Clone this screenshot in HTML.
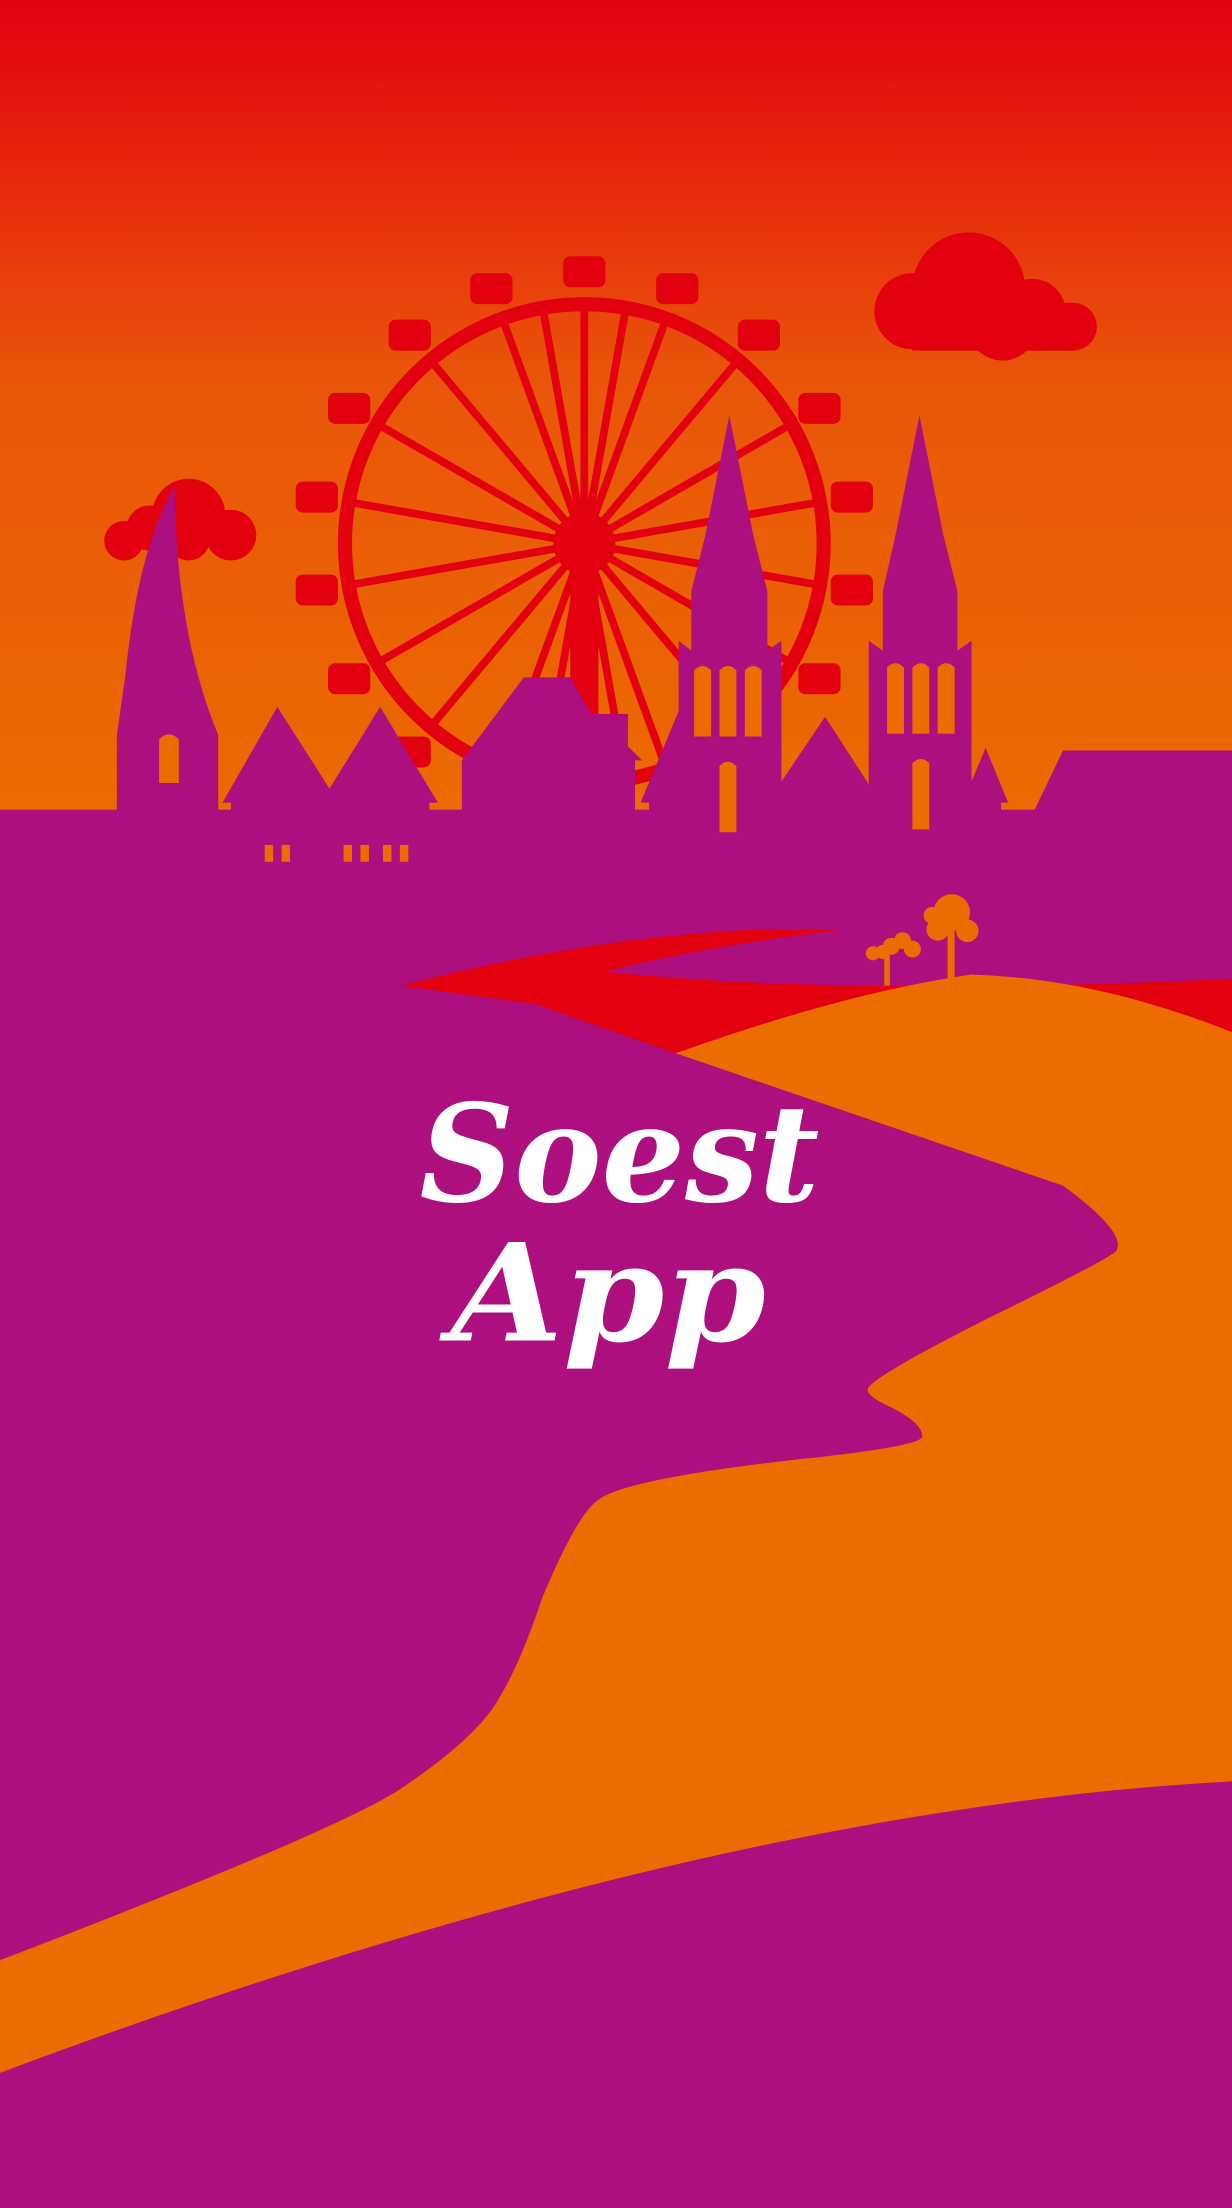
<!DOCTYPE html>
<html><head><meta charset="utf-8"><style>
html,body{margin:0;padding:0;width:1232px;height:2208px;overflow:hidden}
svg{display:block}
</style></head><body>
<svg width="1232" height="2208" viewBox="0 0 875 1568" preserveAspectRatio="none" xmlns="http://www.w3.org/2000/svg">
<defs>
<linearGradient id="sky" x1="0" y1="0" x2="0" y2="1">
<stop offset="0" stop-color="#e3000f"/>
<stop offset="0.45" stop-color="#e9560a"/>
<stop offset="1" stop-color="#ec6c00"/>
</linearGradient>
<rect id="g" x="-15" y="-11" width="30" height="22" rx="5"/>
<line id="s" x1="0" y1="0" x2="0" y2="-166" stroke="#e3000f" stroke-width="5.5"/>
</defs>
<rect width="875" height="1568" fill="#ec6c00"/>
<rect width="875" height="600" fill="url(#sky)"/>

<!-- clouds -->
<g fill="#e3000f">
<circle cx="648" cy="221" r="27"/><circle cx="688" cy="205" r="40"/><circle cx="733" cy="222" r="24"/><circle cx="712" cy="231" r="25"/><circle cx="762" cy="232" r="17"/>
<rect x="648" y="215" width="114" height="34"/>
<circle cx="88" cy="384" r="14"/><circle cx="106" cy="375" r="16"/><circle cx="134" cy="366" r="26"/><circle cx="164" cy="380" r="18"/><circle cx="134" cy="383" r="15"/>
</g>

<!-- ferris wheel -->
<g transform="translate(415,386)" fill="#e3000f">
<circle r="170" fill="none" stroke="#e3000f" stroke-width="10"/>
<use href="#s" transform="rotate(0)"/><use href="#s" transform="rotate(20)"/><use href="#s" transform="rotate(40)"/><use href="#s" transform="rotate(60)"/><use href="#s" transform="rotate(80)"/><use href="#s" transform="rotate(100)"/><use href="#s" transform="rotate(120)"/><use href="#s" transform="rotate(140)"/><use href="#s" transform="rotate(160)"/><use href="#s" transform="rotate(180)"/><use href="#s" transform="rotate(200)"/><use href="#s" transform="rotate(220)"/><use href="#s" transform="rotate(240)"/><use href="#s" transform="rotate(260)"/><use href="#s" transform="rotate(280)"/><use href="#s" transform="rotate(300)"/><use href="#s" transform="rotate(320)"/><use href="#s" transform="rotate(340)"/>
<use href="#s" transform="rotate(10)"/><use href="#s" transform="rotate(-10)"/><use href="#s" transform="rotate(170)"/><use href="#s" transform="rotate(190)"/>
<circle r="22"/>
<use href="#g" x="0" y="-193"/>
<use href="#g" x="66" y="-181"/><use href="#g" x="-66" y="-181"/>
<use href="#g" x="124" y="-148"/><use href="#g" x="-124" y="-148"/>
<use href="#g" x="167" y="-96"/><use href="#g" x="-167" y="-96"/>
<use href="#g" x="190" y="-33"/><use href="#g" x="-190" y="-33"/>
<use href="#g" x="190" y="33"/><use href="#g" x="-190" y="33"/>
<use href="#g" x="167" y="96"/><use href="#g" x="-167" y="96"/>
<use href="#g" x="124" y="148"/><use href="#g" x="-124" y="148"/>
<use href="#g" x="66" y="181"/><use href="#g" x="-66" y="181"/>
<rect x="-10" y="0" width="20" height="140"/>
</g>

<!-- silhouette -->
<g fill="#ae0f7e">
<rect x="0" y="575" width="875" height="993"/>
<path d="M83 672 L83 522 L89 480 Q98 390 124 345 Q125 450 155 522 L155 672 Z"/>
<path d="M164 672 L164 570 L158 570 L197 502 L234 560 L270 502 L311 570 L305 570 L305 607 L328 607 L328 540 L372 481 L405 481 L420 507 L446 507 L446 530 L456 540 L451 540 L451 633 L461 633 L461 600 L455 592 L461 592 L461 570 L455 570 L482 505 L482 455 L491 462 L491 420 L501 380 L518 295 L535 380 L545 420 L545 462 L555 455 L555 555 L586 509 L617 557 L617 455 L627 462 L627 420 L636 380 L653 295 L670 380 L680 420 L680 462 L690 455 L690 555 L700 531 L716 570 L711 570 L711 592 L718 592 L711 600 L711 672 L725 672 L725 610 L718 610 L755 533 L875 533 L875 700 L164 700 Z"/>
</g>
<!-- windows -->
<g fill="#ec6c00">
<path d="M113 556 L113 525 Q120 518 127 525 L127 556 Z"/>
<rect x="188" y="600" width="6" height="12"/><rect x="200" y="600" width="6" height="12"/>
<rect x="244" y="600" width="6" height="12"/><rect x="256" y="600" width="6" height="12"/><rect x="272" y="600" width="6" height="12"/><rect x="284" y="600" width="6" height="12"/>
<path d="M493 523 V476 Q499 470 505 476 V523 Z"/><path d="M511 523 V476 Q517 470 523 476 V523 Z"/><path d="M529 523 V476 Q535 470 541 476 V523 Z"/>
<path d="M511 591 V544 Q517 538 523 544 V591 Z"/>
<path d="M630 521 V474 Q636 468 642 474 V521 Z"/><path d="M648 521 V474 Q654 468 660 474 V521 Z"/><path d="M666 521 V474 Q672 468 678 474 V521 Z"/>
<path d="M648 589 V542 Q654 536 660 542 V589 Z"/>
</g>

<!-- river -->
<path fill="#e3000f" d="M285 700 Q420 665 540 660 L600 660 Q500 672 430 690 Q600 708 875 695 L875 735 L480 748 L380 713 Z"/>
<!-- orange path -->
<path fill="#ec6c00" d="M480 748 Q600 705 690 692 Q780 695 875 733 L875 1265 Q500 1285 0 1472 L0 1392 Q240 1300 285 1270 Q340 1233 355 1205 Q370 1180 385 1135 Q410 1075 425 1065 Q445 1050 570 1036 Q655 1027 655 1020 Q655 1010 630 998 Q613 990 617 985 Q625 975 700 937 Q790 893 793 888 Q800 875 755 842 Z"/>
<!-- trees -->
<g fill="#ec6c00">
<circle cx="676" cy="648" r="13"/><circle cx="666" cy="660" r="8"/><circle cx="687" cy="661" r="8"/><circle cx="662" cy="650" r="6"/>
<rect x="673" y="660" width="5" height="35"/>
<circle cx="633" cy="672" r="6"/><circle cx="641" cy="668" r="6"/><circle cx="648" cy="674" r="6"/><circle cx="620" cy="677" r="5"/><circle cx="627" cy="676" r="5"/>
<rect x="628" y="675" width="4" height="25"/>
</g>

<!-- title -->
<g fill="#ffffff" font-family="DejaVu Serif, Liberation Serif, serif" font-weight="bold" font-style="italic" text-anchor="middle">
<text x="440" y="853" font-size="96" textLength="284" lengthAdjust="spacingAndGlyphs">Soest</text>
<text x="432" y="952" font-size="96" textLength="224" lengthAdjust="spacingAndGlyphs">App</text>
</g>
</svg>
</body></html>
